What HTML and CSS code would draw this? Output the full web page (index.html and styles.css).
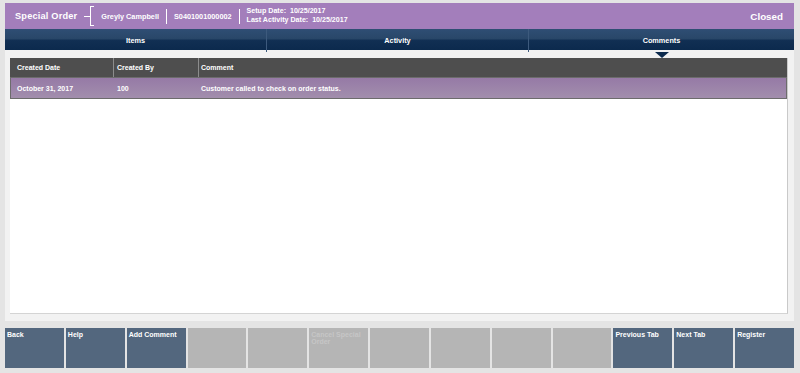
FILE: index.html
```html
<!DOCTYPE html>
<html>
<head>
  <meta charset="UTF-8">
  <title>Special Order</title>
  <link rel="stylesheet" href="styles.css">
</head>
<body>
  <div class="app">
    <div class="header">
      <div class="title">Special Order</div>
      <div class="bracket"></div>
      <div class="info">Greyly Campbell</div>
      <div class="sep"></div>
      <div class="info">S0401001000002</div>
      <div class="sep"></div>
      <div class="dates">
        <div>Setup Date:&nbsp; 10/25/2017</div>
        <div>Last Activity Date:&nbsp; 10/25/2017</div>
      </div>
      <div class="state">Closed</div>
    </div>

    <div class="tabs">
      <div class="tab">Items</div>
      <div class="tab">Activity</div>
      <div class="tab active">Comments</div>
    </div>

    <div class="panel">
      <div class="grid">
        <div class="grid-head">
          <div class="col col-date">Created Date</div>
          <div class="col col-by">Created By</div>
          <div class="col col-comment">Comment</div>
        </div>
        <div class="grid-row selected">
          <div class="col col-date">October 31, 2017</div>
          <div class="col col-by">100</div>
          <div class="col col-comment">Customer called to check on order status.</div>
        </div>
      </div>
    </div>

    <div class="buttons">
      <button class="btn">Back</button>
      <button class="btn">Help</button>
      <button class="btn">Add Comment</button>
      <button class="btn off"></button>
      <button class="btn off"></button>
      <button class="btn off">Cancel Special Order</button>
      <button class="btn off"></button>
      <button class="btn off"></button>
      <button class="btn off"></button>
      <button class="btn off"></button>
      <button class="btn">Previous Tab</button>
      <button class="btn">Next Tab</button>
      <button class="btn">Register</button>
    </div>
  </div>
</body>
</html>
```

FILE: styles.css
```css
* {
  margin: 0;
  padding: 0;
  box-sizing: border-box;
}

body {
  width: 800px;
  height: 373px;
  background: #e4e4e4;
  font-family: "Liberation Sans", Arial, sans-serif;
  font-weight: bold;
  color: #fff;
  overflow: hidden;
}

.app {
  width: 789px;
  margin-left: 5px;
  padding-top: 3px;
}

.header {
  height: 26px;
  background: #a37ebb;
  display: flex;
  align-items: center;
  padding: 0 11px 0 10px;
}

.title {
  font-size: 9.2px;
  letter-spacing: 0.2px;
}

/* the "-[" mark between the title and the customer name */
.bracket {
  position: relative;
  width: 4px;
  height: 20px;
  margin: 0 7px 0 13px;
  border-left: 1px solid #fff;
  border-top: 1px solid #fff;
  border-bottom: 1px solid #fff;
}

.bracket::before {
  content: "";
  position: absolute;
  left: -7px;
  top: 9px;
  width: 6px;
  height: 1px;
  background: #fff;
}

.info {
  font-size: 7.3px;
}

.sep {
  width: 1px;
  height: 15px;
  background: #fff;
  margin: 0 7px;
}

.dates {
  font-size: 7.1px;
  line-height: 9px;
}

.state {
  margin-left: auto;
  font-size: 9.8px;
}

.tabs {
  height: 21px;
  display: grid;
  grid-template-columns: 262px 262px 1fr;
  background: linear-gradient(#2f4e74 0%, #294769 45%, #112f53 55%, #0c2a4d 100%);
}

.tab {
  position: relative;
  font-size: 7.3px;
  text-align: center;
  line-height: 23px;
  border-right: 1px solid #3d5a7d;
}

.tab:last-child {
  border-right: none;
}

.tab.active::after {
  content: "";
  position: absolute;
  left: 50%;
  bottom: -6px;
  margin-left: -7px;
  border-left: 7px solid transparent;
  border-right: 7px solid transparent;
  border-top: 6px solid #0c2a4d;
}

.panel {
  height: 271px;
  background: #f2f2f2;
  padding: 8px 6px 7px 5px;
}

.grid {
  height: 100%;
  background: #fff;
  border-right: 1px solid #c9c9c9;
  border-bottom: 1px solid #d4d4d4;
}

.grid-head,
.grid-row {
  display: flex;
  font-size: 7px;
}

.grid-head {
  height: 19px;
  background: #4e4e4e;
  align-items: center;
}

.grid-head .col {
  height: 100%;
  line-height: 19px;
  border-right: 1px solid #8c8c8c;
}

.grid-head .col:last-child {
  border-right: none;
}

.col {
  padding-left: 3px;
}

.col-date {
  width: 104px;
  padding-left: 7px;
}

.col-by {
  width: 85px;
}

.col-comment {
  flex: 1;
  padding-left: 2px;
}

.grid-row.selected {
  height: 22px;
  align-items: center;
  background: linear-gradient(#967aa6, #a28ead);
  border: 1px solid #6c6c6c;
}

.grid-row .col-date {
  width: 103px;
  padding-left: 6px;
}

.buttons {
  margin-top: 7px;
  height: 40px;
  display: grid;
  grid-template-columns: repeat(13, 1fr);
  gap: 2px;
}

.btn {
  border: none;
  background: #53677e;
  color: #fff;
  font-family: inherit;
  font-weight: bold;
  font-size: 7px;
  text-align: left;
  display: flex;
  align-items: flex-start;
  padding: 3px 2px;
  line-height: 7px;
}

.btn.off {
  background: #b5b5b5;
  color: #c6c6c6;
}
```
